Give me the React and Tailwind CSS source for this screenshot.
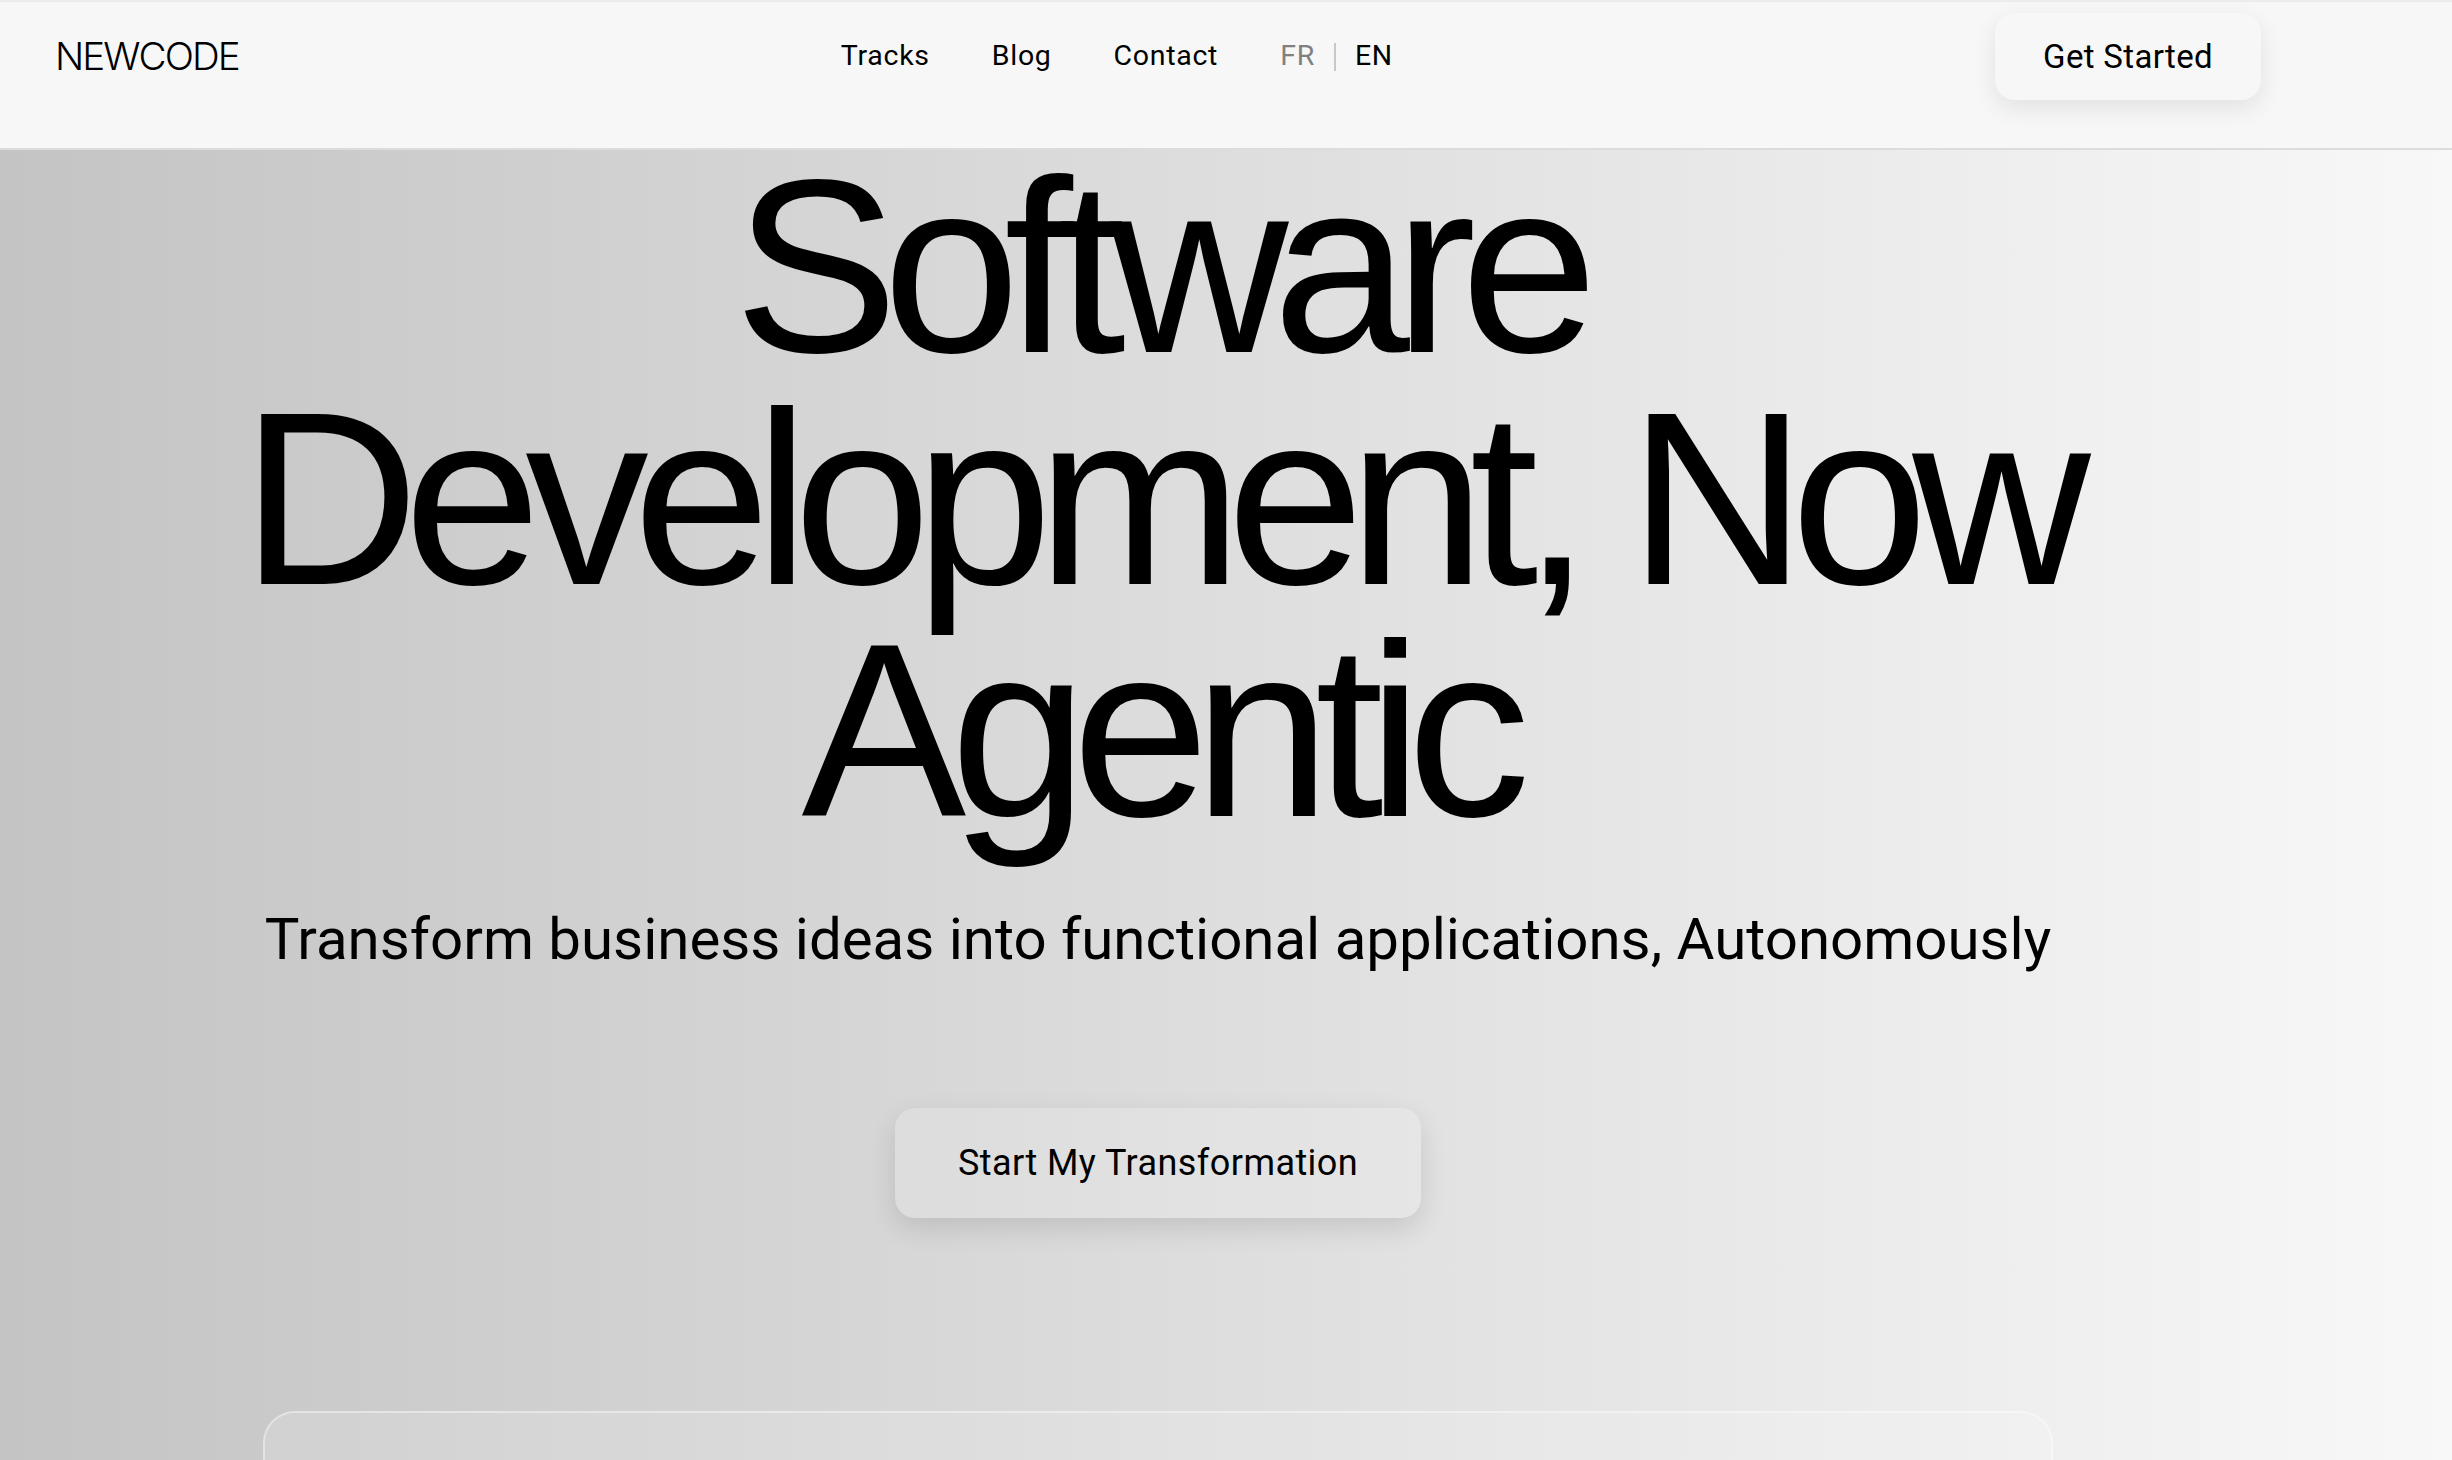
import React from "react";

export default function App() {
  return (
    <div className="w-[2452px] min-h-[1460px] bg-gradient-to-r from-[#c4c4c4] to-[#f8f8f8] overflow-hidden">
      <header className="h-[150px] bg-[#f7f7f7] border-t-2 border-t-[#ececec] border-b-2 border-b-[#dcdcdc] pl-[55px] pr-[191px] pt-[11px] flex items-start justify-between">
        <div className="h-[87px] flex items-center">
          <span className="text-[38.5px] leading-none font-light tracking-[-0.05em] text-black" style={{ fontFamily: "Inter, 'Liberation Sans', sans-serif" }}>
            NEWCODE
          </span>
        </div>
        <nav className="h-[87px] flex items-center gap-[62px] text-[28.5px] tracking-[0.025em] text-black" style={{ fontFamily: "Roboto, 'Liberation Sans', sans-serif" }}>
          <a className="leading-none">Tracks</a>
          <a className="leading-none">Blog</a>
          <a className="leading-none">Contact</a>
          <div className="flex items-center gap-[19px]">
            <span className="leading-none text-[#808080]">FR</span>
            <span className="w-[2px] h-[28px] bg-[#c8c8c8]" />
            <span className="leading-none">EN</span>
          </div>
        </nav>
        <button className="h-[87px] w-[266px] rounded-[20px] bg-[#f7f7f7] shadow-[0_8px_24px_rgba(0,0,0,0.09)] text-[33px] tracking-[0.01em] text-black flex items-center justify-center" style={{ fontFamily: "Roboto, 'Liberation Sans', sans-serif" }}>
          Get Started
        </button>
      </header>

      <main className="ml-[263px] w-[1790px] flex flex-col items-center">
        <div className="flex flex-col items-center text-[247px] leading-[232px] tracking-[-0.064em] text-black" style={{ fontFamily: "'Liberation Sans', Arial, sans-serif" }}>
          <div className="whitespace-nowrap">Software</div>
          <div className="whitespace-nowrap">Development, Now</div>
          <div className="whitespace-nowrap">Agentic</div>
        </div>
        <p className="mt-[60px] text-[58.2px] leading-[67px] text-black whitespace-nowrap" style={{ fontFamily: "Roboto, 'Liberation Sans', sans-serif" }}>
          Transform business ideas into functional applications, Autonomously
        </p>
        <button className="mt-[135px] h-[110px] w-[526px] rounded-[20px] bg-white/15 shadow-[0_10px_28px_rgba(0,0,0,0.12)] text-[36px] tracking-[0.012em] text-black flex items-center justify-center" style={{ fontFamily: "Roboto, 'Liberation Sans', sans-serif" }}>
          Start My Transformation
        </button>
        <div className="mt-[193px] w-full h-[500px] rounded-[32px] border-2 border-white/40 bg-white/15" />
      </main>
    </div>
  );
}
